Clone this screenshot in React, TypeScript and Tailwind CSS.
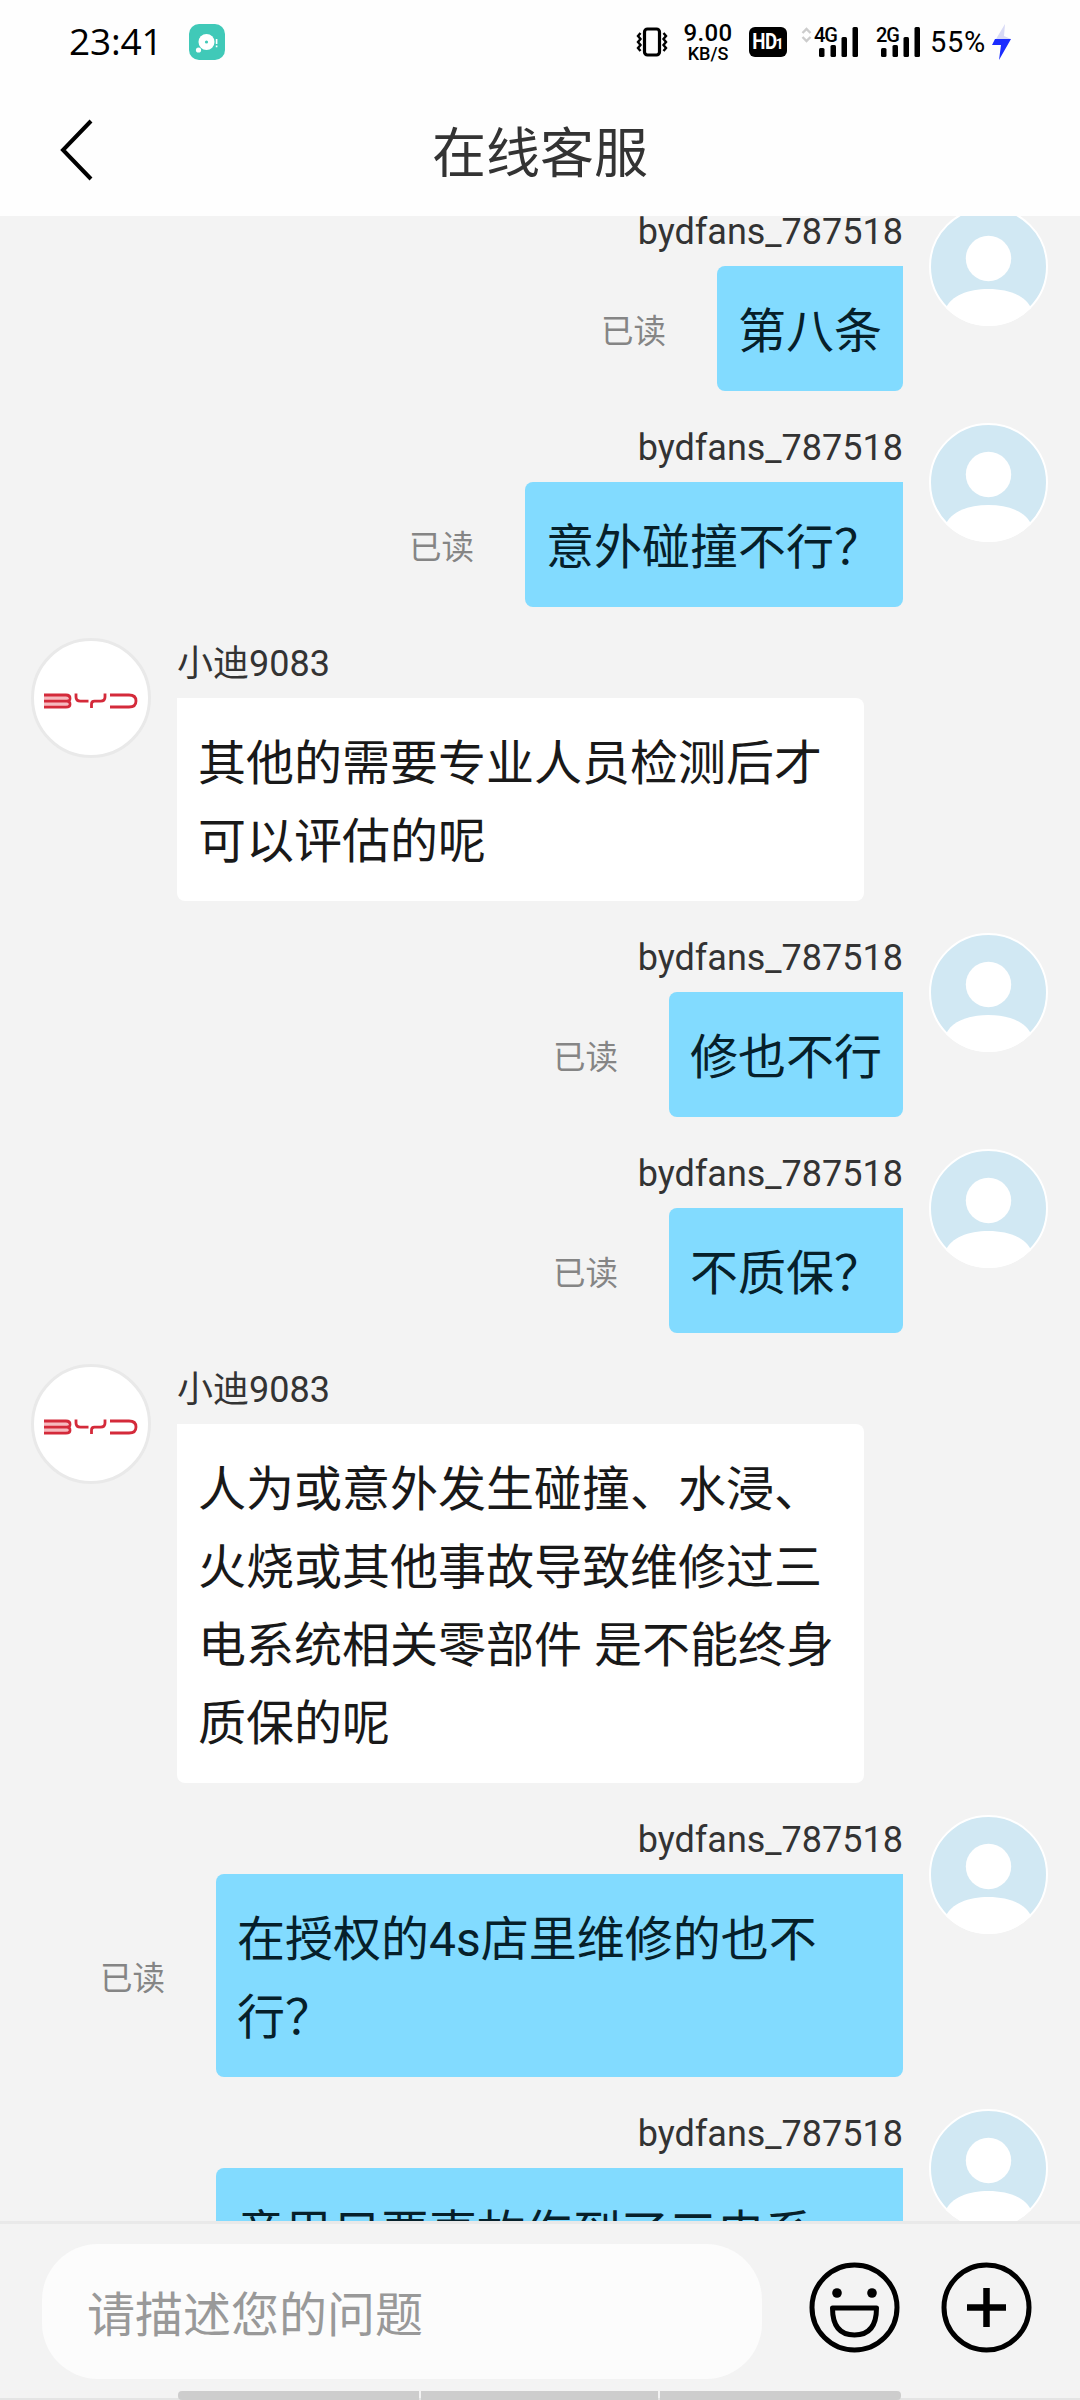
import type { ReactNode } from 'react';

type Message = {
  id: number;
  from: 'me' | 'agent';
  name: string;
  lines: string[];
  read?: boolean;
};

const messages: Message[] = [
  { id: 1, from: 'me', name: 'bydfans_787518', lines: ['第八条'], read: true },
  { id: 2, from: 'me', name: 'bydfans_787518', lines: ['意外碰撞不行？'], read: true },
  { id: 3, from: 'agent', name: '小迪9083', lines: ['其他的需要专业人员检测后才', '可以评估的呢'] },
  { id: 4, from: 'me', name: 'bydfans_787518', lines: ['修也不行'], read: true },
  { id: 5, from: 'me', name: 'bydfans_787518', lines: ['不质保？'], read: true },
  {
    id: 6,
    from: 'agent',
    name: '小迪9083',
    lines: ['人为或意外发生碰撞、水浸、', '火烧或其他事故导致维修过三', '电系统相关零部件 是不能终身', '质保的呢'],
  },
  { id: 7, from: 'me', name: 'bydfans_787518', lines: ['在授权的4s店里维修的也不', '行？'], read: true },
  { id: 8, from: 'me', name: 'bydfans_787518', lines: ['意思只要事故伤到了三电系'] },
];

function SignalBars({ label }: { label: string }) {
  return (
    <div className="relative h-[30px] w-[45px]">
      <span className="absolute -top-[2px] left-0 text-[20px] leading-[20px] font-medium tracking-[-1px]">{label}</span>
      <svg className="absolute inset-0" width="45" height="30" viewBox="0 0 45 30">
        <rect x="5" y="21" width="5.5" height="9" rx="1.5" />
        <rect x="16.5" y="18" width="5.5" height="12" rx="1.5" />
        <rect x="27.5" y="10" width="5.5" height="20" rx="1.5" />
        <rect x="38.5" y="0" width="5.5" height="30" rx="1.5" />
      </svg>
    </div>
  );
}

function StatusBar() {
  return (
    <div className="flex h-[84px] items-center pl-[69px] text-black">
      <span className="mb-[4px] w-[120px] font-['Open_Sans',sans-serif] text-[37px] leading-none tracking-[-0.2px]">23:41</span>
      <svg width="36" height="36" viewBox="0 0 36 36">
        <rect width="36" height="36" rx="10" fill="#40c9b8" />
        <circle cx="17.5" cy="18" r="8" fill="#fff" />
        <circle cx="17.5" cy="18" r="1.6" fill="#40c9b8" />
        <circle cx="9.5" cy="26" r="2.6" fill="#fff" />
        <path d="M27.6 15v5M27.6 21.6v1.6" stroke="#fff" strokeWidth="1.6" />
      </svg>
      <div className="ml-[411px] flex items-center font-[Roboto,sans-serif]">
        <svg width="32" height="30" viewBox="0 0 32 30" fill="none" stroke="#000">
          <rect x="8.500" y="2" width="15" height="26" rx="3" strokeWidth="3.2" />
          <path d="M4.500 6l-2.500 3 2.500 3-2.500 3 2.500 3-2.500 3 2.500 3M27.500 6l2.500 3-2.500 3 2.500 3-2.500 3 2.500 3-2.500 3" strokeWidth="2.4" />
        </svg>
        <div className="ml-[13px] flex w-[54px] flex-col items-center font-medium">
          <span className="text-[24px] leading-[21px] tracking-[0.4px]">9.00</span>
          <span className="mt-[1px] text-[18px] leading-[17px]">KB/S</span>
        </div>
        <div className="ml-[14px] flex h-[30px] w-[38px] items-center justify-center rounded-[6px] bg-black font-bold text-white">
          <span className="-mr-[2px] -ml-[3px] scale-x-85 text-[22px] leading-none tracking-[-0.5px]">HD</span>
          <span className="mt-[4px] -ml-[1px] text-[14px] leading-none">1</span>
        </div>
        <svg className="-mt-[14px] mr-[2px] ml-[14px]" width="11" height="16" viewBox="0 0 11 16" fill="none" stroke="#ccc" strokeWidth="2.4">
          <path d="M1.5 6l4-4 4 4M1.5 10l4 4 4-4" />
        </svg>
        <SignalBars label="4G" />
        <div className="ml-[17px]">
          <SignalBars label="2G" />
        </div>
        <span className="ml-[9px] w-[62px] text-[29px] leading-none tracking-[0.7px]">55%</span>
        <svg width="19" height="36" viewBox="0 0 19 36">
          <path d="M13 0L1 20h8l1-5h9L12 12z" fill="#d8daf6" />
          <path d="M3 15h16L7 36l2-15H0z" fill="#1a2cff" />
        </svg>
      </div>
    </div>
  );
}

function Header() {
  return (
    <header className="flex h-[132px] items-center pl-[58px]">
      <svg width="40" height="66" viewBox="0 0 40 66" fill="none" stroke="#000" strokeWidth="4">
        <path d="M33 4L5 33l28 29" />
      </svg>
      <h1 className="mt-[10px] w-[884px] text-center text-[54px] leading-none text-[#333]">在线客服</h1>
    </header>
  );
}

function UserAvatar() {
  return (
    <svg className="shrink-0" width="119" height="119" viewBox="0 0 119 119">
      <defs>
        <clipPath id="avatar-clip">
          <circle cx="59.5" cy="59.5" r="59.5" />
        </clipPath>
      </defs>
      <circle cx="59.5" cy="59.5" r="58.5" fill="#d1e8f3" stroke="#fff" strokeWidth="2" />
      <circle cx="59.5" cy="51.5" r="22.7" fill="#fff" />
      <path d="M17 101c5-12 22-19 42.5-19s37.5 7 42.5 19v18H17z" fill="#fff" clipPath="url(#avatar-clip)" />
    </svg>
  );
}

function AgentAvatar() {
  return (
    <svg className="-mt-[1px] shrink-0" width="120" height="120" viewBox="0 0 120 120" fill="none">
      <circle cx="60" cy="60" r="58.5" fill="#fff" stroke="#e9e9e9" strokeWidth="3" />
      {/* soft tint between the bars of the B */}
      <path d="M13 57h24v13H13z" fill="#f6b9be" />
      <g stroke="#d42a3a" strokeWidth="2.8">
        <path d="M13 57h22q4 0 4 3.200t-3 3q3 0 3 3t-4 3H13M13 63.100h23" />
        <path d="M45 55.500v3.500q0 4.200 4.500 4.200h8M74 55.500v3.500q0 4.200-4.500 4.200h-6q-3 0-3 3v3.800" />
        <path d="M79 57h19q7 0 7 6t-7 6H79" />
      </g>
    </svg>
  );
}

function Bubble({ mine, children }: { mine: boolean; children: ReactNode }) {
  const base = 'flex flex-col px-[21px] pt-[27px] pb-[20px] text-[48px] leading-[78px] whitespace-pre';
  return mine ? (
    <div className={`${base} rounded-[8px] rounded-tr-none bg-[#82dbff] text-[#06202a]`}>{children}</div>
  ) : (
    <div className={`${base} w-[687px] rounded-[8px] rounded-tl-none bg-white text-[#191919]`}>{children}</div>
  );
}

function MessageRow({ message }: { message: Message }) {
  const mine = message.from === 'me';
  const wide = mine && (message.lines[0]?.length ?? 0) > 11;
  return (
    <div className={mine ? 'flex justify-end gap-[26px] pr-8 pb-[32px]' : 'flex gap-[26px] pb-[32px] pl-[31px]'}>
      {!mine && <AgentAvatar />}
      <div className={mine ? 'flex flex-col items-end' : 'flex flex-col items-start'}>
        <div className="h-[59px] pt-[4px] text-[36px] leading-[42px] text-[#333]">{message.name}</div>
        <div className="flex items-center">
          {message.read && <span className="mt-[8px] mr-[51px] text-[32.5px] leading-none text-[#858585]">已读</span>}
          <Bubble mine={mine}>
            {message.lines.map((line) => (
              <span key={line} className={wide ? 'w-[645px]' : ''}>
                {line}
              </span>
            ))}
          </Bubble>
        </div>
      </div>
      {mine && <UserAvatar />}
    </div>
  );
}

function InputBar() {
  return (
    <footer className="flex h-[179px] shrink-0 flex-col border-t-[3px] border-[#e9e9e9] bg-[#f3f3f3]">
      <div className="flex h-[167px] items-start pt-[20px] pl-[42px]">
        <div className="flex h-[135px] w-[720px] items-center rounded-[56px] bg-[#fcfcfc] pt-[8px] pl-[45px] text-[48px] leading-none text-[#999]">
          请描述您的问题
        </div>
        <svg className="mt-[18px] ml-[47px]" width="91" height="91" viewBox="0 0 91 91" fill="none" stroke="#000" strokeWidth="5">
          <circle cx="45.5" cy="45.5" r="42.5" />
          <path d="M23.5 46h44q0 27-22 27t-22-27z" strokeLinejoin="round" />
          <circle cx="28" cy="31" r="4.8" fill="#000" stroke="none" />
          <circle cx="63" cy="31" r="4.8" fill="#000" stroke="none" />
        </svg>
        <svg className="mt-[18px] ml-[41px]" width="91" height="91" viewBox="0 0 91 91" fill="none" stroke="#000" strokeWidth="5">
          <circle cx="45.5" cy="45.5" r="42.5" />
          <path d="M26 45.5h39M45.5 26v39" strokeWidth="6.5" />
        </svg>
      </div>
      <div className="flex h-[9px] gap-[2px] border-b-2 border-[#e4e4e4] pl-[178px]">
        <div className="h-[9px] w-[241px] rounded-l-[4px] bg-[#cdcdcd]" />
        <div className="h-[9px] w-[237px] bg-[#cdcdcd]" />
        <div className="h-[9px] w-[241px] rounded-r-[4px] bg-[#cdcdcd]" />
      </div>
    </footer>
  );
}

export default function App() {
  return (
    <div className="flex h-[2400px] w-[1080px] flex-col overflow-hidden bg-[#f3f3f3] font-[Roboto,'Noto_Sans_CJK_SC',sans-serif]">
      <div className="shrink-0 bg-[#fefefe]">
        <StatusBar />
        <Header />
      </div>
      {/* list is scrolled a few pixels past the first row */}
      <main className="min-h-0 flex-1 overflow-hidden">
        <div className="-mt-[9px]">
          {messages.map((message) => (
            <MessageRow key={message.id} message={message} />
          ))}
        </div>
      </main>
      <InputBar />
    </div>
  );
}
